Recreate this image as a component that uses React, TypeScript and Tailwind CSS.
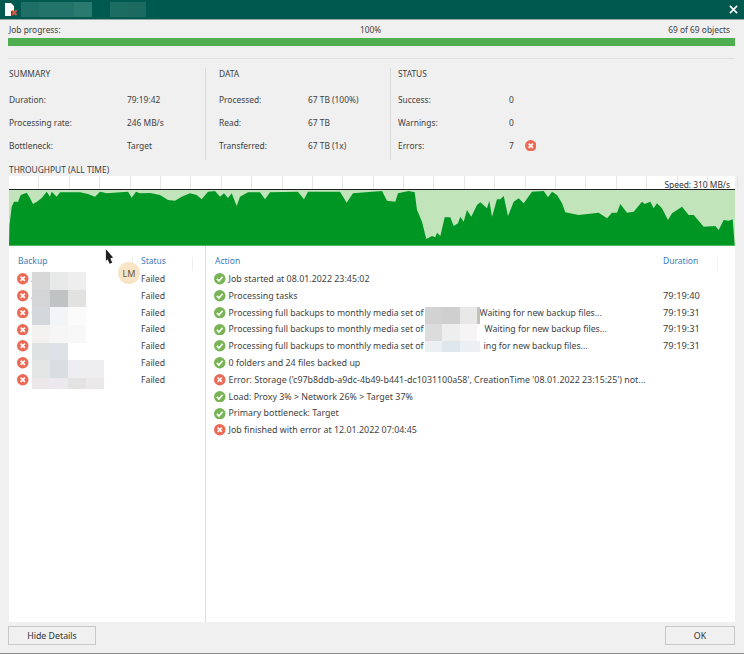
const AREA = "9,246 9.5,225 11.7,206.7 14,201.7 18,201.7 20.7,195 26.7,192.7 30,198 33,204 37,201.7 41.7,198 46.7,191.7 50,196.7 51.7,191.7 56.7,196.7 60,192.3 80,192.3 88,194 95,196.7 100,191.7 106.7,193.3 128,191.7 131.7,197.7 136,191.7 140,193.3 150,193 160,195 168,200 175,200.7 181.7,196.7 190,193.3 196.7,195 201.7,199.3 208,191.7 215,191 220,196.7 224,193.3 228,198 231.7,193.3 236.7,206 240,196.7 248,192.3 260,192.3 265,199.3 270,192.3 298,191.7 304,199.3 308,191.7 340,191.7 346.7,202.7 353,193.3 372,191.7 382,191 387,200.7 395.3,201.7 398,193.3 408.7,191 414.7,192.3 417,210 422,221.7 426.3,239 432,236 435.3,237.3 437,232.7 440.3,236 444.7,217.3 450.3,217.3 453.7,226 458,223.3 460.3,216.7 463.7,221.7 467,210 471.3,216.7 477,205 480.3,202.3 487,208.3 489.3,200.7 492,216.7 497,199.3 500.3,199.3 503.7,196 508,216 513.7,201.7 518.7,198.3 523.7,203.3 532,191.7 543.7,191 548,197.3 552,191.7 557,195 562,203.3 565.3,212.3 578.7,215 598.7,212.7 607,218.3 612,212.7 617,212.7 620.3,204 627,212.7 633.7,211.7 642,201.7 644.7,204 650.3,201.7 653.7,208.3 657,203.3 662,208.3 668,220 672,213.3 682,206.7 688.7,215 693.7,215 703.7,226.7 715.3,226 718.7,230 723.7,220 728.7,220.7 732.7,219.3 734.7,246";

function Ok() {
  return (
    <svg viewBox="0 0 12 12" className="w-[11.5px] h-[11.5px] shrink-0">
      <circle cx="6" cy="6" r="6" fill="#78b455" />
      <path d="M3 6.2 5.2 8.4 9 4" fill="none" stroke="#fff" strokeWidth="1.7" />
    </svg>
  );
}

function Err() {
  return (
    <svg viewBox="0 0 12 12" className="w-[11.5px] h-[11.5px] shrink-0">
      <circle cx="6" cy="6" r="6" fill="#ec6a55" />
      <path d="M3.8 3.8 8.2 8.2M8.2 3.8 3.8 8.2" fill="none" stroke="#fff" strokeWidth="1.8" />
    </svg>
  );
}

function Stat({ label, value, vx, extra }: { label: string; value: string; vx: string; extra?: boolean }) {
  return (
    <div className="flex items-center h-[23px] leading-[14px]">
      <span className={vx}>{label}</span>
      <span>{value}</span>
      {extra && <span className="ml-[11px]"><Err /></span>}
    </div>
  );
}

const TITLE = ["#1f6f66", "#23736a", "#23736a", "#2a7a70", "#00594e", "#1c6c62", "#1c6a5f"];
const BACKUP_MOSAIC = [
  ["#d8d8d9", "#e8e9e9", "#eeeeee", "#ffffff"],
  ["#d3d5d6", "#bfc3c3", "#e2e2e0", "#ffffff"],
  ["#d4d7dc", "#f2f4f5", "#fbfbfb", "#ffffff"],
  ["#f3f2f1", "#f6f6f6", "#f8f8f8", "#ffffff"],
  ["#dfe2e2", "#dde2e8", "#ffffff", "#ffffff"],
  ["#e4e6e6", "#d9dee0", "#eeedf0", "#eeedf0"],
  ["#ece8ea", "#ebe9ee", "#e3e3e4", "#ebe8ea"],
];
const ACTION_MOSAIC = [
  ["#d2d2d2", "#cfcfcf", "#e8e8e8", "#c4c1bb"],
  ["#dcdcdc", "#eeeeee", "#f6f4f4", "#ffffff"],
  ["#ecf0f2", "#dfe7ec", "#ecf0f2", "#ecf0f2"],
];
const LETTERS = ["A", "A", "C", "F", "F", "F", "F"];

type Act = { ok: boolean; text: string; tail?: string; gap?: string; dur?: string };
const ACTIONS: Act[] = [
  { ok: true, text: "Job started at 08.01.2022 23:45:02" },
  { ok: true, text: "Processing tasks", dur: "79:19:40" },
  { ok: true, text: "Processing full backups to monthly media set of", tail: "Waiting for new backup files...", gap: "w-[50px]", dur: "79:19:31" },
  { ok: true, text: "Processing full backups to monthly media set of", tail: "Waiting for new backup files...", gap: "w-[55px]", dur: "79:19:31" },
  { ok: true, text: "Processing full backups to monthly media set of", tail: "ing for new backup files...", gap: "w-[54px]", dur: "79:19:31" },
  { ok: true, text: "0 folders and 24 files backed up" },
  { ok: false, text: "Error: Storage ('c97b8ddb-a9dc-4b49-b441-dc1031100a58', CreationTime '08.01.2022 23:15:25') not..." },
  { ok: true, text: "Load: Proxy 3% > Network 26% > Target 37%" },
  { ok: true, text: "Primary bottleneck: Target" },
  { ok: false, text: "Job finished with error at 12.01.2022 07:04:45" },
];

export default function App() {
  return (
    <div className="relative w-[744px] h-[654px] overflow-hidden flex flex-col bg-[#f0f0f0] text-[#3f3f3f] text-[8.4px] leading-none font-['Noto_Sans',sans-serif]">
      <div className="h-[20px] shrink-0 flex items-center bg-[#00594e] border-b border-[#8fa8a4] pl-[5px] pr-[5px]">
        <svg viewBox="0 0 12 13" className="w-[12px] h-[13px] shrink-0">
          <path d="M0 0h6l3 3v5H6v5H0z" fill="#fff" />
          <path d="M7 7.5 11.5 12M11.5 7.5 7 12" stroke="#e0533d" strokeWidth="2" />
        </svg>
        <div className="flex ml-[4px] h-[15px]">
          {TITLE.map((c, i) => (
            <div key={i} className="w-[17.8px] h-full" style={{ backgroundColor: c }} />
          ))}
        </div>
        <svg viewBox="0 0 10 10" className="w-[9px] h-[9px] ml-auto mr-[1px]">
          <path d="M1 1 9 9M9 1 1 9" stroke="#fff" strokeWidth="1.8" />
        </svg>
      </div>

      <div className="h-[17px] shrink-0 relative flex items-center justify-between pl-[9px] pr-[14px] pt-[3px] leading-[12px]">
        <span>Job progress:</span>
        <span className="absolute left-[360px]">100%</span>
        <span>69 of 69 objects</span>
      </div>
      <div className="h-[8px] mt-[1px] shrink-0 ml-[8px] mr-[9px] bg-[#4fae4f]" />
      <div className="h-[1px] mt-[12px] shrink-0 ml-[8px] mr-[9px] bg-[#e0e0e0]" />

      <div className="h-[92px] shrink-0 flex mt-[9px]">
        <div className="w-[206px] pl-[9px] border-r border-[#dcdcdc]">
          <div className="h-[19px] pt-[2px]">SUMMARY</div>
          <div className="pt-[1px]">
            <Stat label="Duration:" value="79:19:42" vx="w-[118px]" />
            <Stat label="Processing rate:" value="246 MB/s" vx="w-[118px]" />
            <Stat label="Bottleneck:" value="Target" vx="w-[118px]" />
          </div>
        </div>
        <div className="w-[185px] pl-[13px] border-r border-[#dcdcdc]">
          <div className="h-[19px] pt-[2px]">DATA</div>
          <div className="pt-[1px]">
            <Stat label="Processed:" value="67 TB (100%)" vx="w-[89px]" />
            <Stat label="Read:" value="67 TB" vx="w-[89px]" />
            <Stat label="Transferred:" value="67 TB (1x)" vx="w-[89px]" />
          </div>
        </div>
        <div className="flex-1 pl-[7px]">
          <div className="h-[19px] pt-[2px]">STATUS</div>
          <div className="pt-[1px]">
            <Stat label="Success:" value="0" vx="w-[111px]" />
            <Stat label="Warnings:" value="0" vx="w-[111px]" />
            <Stat label="Errors:" value="7" vx="w-[111px]" extra />
          </div>
        </div>
      </div>

      <div className="h-[8px] shrink-0 pl-[9px] leading-[8px] mt-[6px] mb-[2px]">THROUGHPUT (ALL TIME)</div>

      <div className="relative h-[70px] shrink-0 ml-[9px] mr-[9px] flex flex-col">
        <div className="h-[14px] shrink-0 flex bg-white border-b border-[#222]">
          {Array.from({ length: 24 }).map((_, i) => (
            <div key={i} className="w-[30.4px] shrink-0 border-r border-[#e6e6e6]" />
          ))}
        </div>
        <span className="absolute right-[5px] top-[5px] text-[#333]">Speed: 310 MB/s</span>
        <svg viewBox="9 190 726 56" preserveAspectRatio="none" className="w-full flex-1 block">
          <rect x="9" y="190" width="726" height="56" fill="#c1e4ba" />
          <polygon points={AREA} fill="#009624" />
          <rect x="9" y="245" width="726" height="1" fill="#4fb662" />
        </svg>
      </div>

      <div className="relative flex-1 shrink-0 ml-[9px] mr-[9px] flex bg-white">
        <div className="w-[197px] shrink-0 border-r border-[#dedede]">
          <div className="h-[24.6px] flex pt-[11px] text-[#3c7dbd] text-[8.5px]">
            <span className="w-[124px] pl-[9px] h-[14px] border-r border-[#eeeeee]">Backup</span>
            <span className="w-[60px] pl-[8px] h-[14px] border-r border-[#eeeeee]">Status</span>
          </div>
          {LETTERS.map((l, i) => (
            <div key={i} className="h-[16.8px] flex items-center text-[8.7px] leading-[14px]">
              <span className="w-[132px] pl-[8px] flex items-center gap-[3px] shrink-0">
                <Err />
                <span>{l}</span>
              </span>
              <span>Failed</span>
            </div>
          ))}
        </div>
        <div className="flex-1 min-w-0">
          <div className="h-[24.6px] flex pt-[11px] text-[#3c7dbd] text-[8.5px]">
            <span className="w-[457px] pl-[9px] shrink-0">Action</span>
            <span className="w-[55px] h-[14px] border-r border-[#f4f4f4]">Duration</span>
          </div>
          {ACTIONS.map((a, i) => (
            <div key={i} className="h-[16.8px] flex items-center pl-[8px] leading-[14px]">
              <span className={a.tail ? "w-[449px] shrink-0 flex items-center gap-[3px] whitespace-nowrap text-[8.7px]" : "w-[449px] shrink-0 flex items-center gap-[3px] whitespace-nowrap text-[8.9px]"}>
                {a.ok ? <Ok /> : <Err />}
                <span>{a.text}</span>
                {a.gap && <span className={`${a.gap} shrink-0`} />}
                {a.tail && <span>{a.tail}</span>}
              </span>
              {a.dur && <span className="text-[9.3px]">{a.dur}</span>}
            </div>
          ))}
        </div>

        <div className="absolute left-[23px] top-[26px] flex flex-col">
          {BACKUP_MOSAIC.map((row, r) => (
            <div key={r} className={r === 6 ? "flex h-[11px]" : "flex h-[17.67px]"}>
              {row.map((c, k) => (
                <div key={k} className="w-[18px]" style={{ backgroundColor: c }} />
              ))}
            </div>
          ))}
        </div>
        <div className="absolute left-[416px] top-[61px] flex flex-col">
          {ACTION_MOSAIC.map((row, r) => (
            <div key={r} className={r === 2 ? "flex h-[11px]" : "flex h-[17px]"}>
              {row.map((c, k) => (
                <div key={k} className={k === 3 ? "w-[3.5px]" : "w-[17.3px]"} style={{ backgroundColor: c }} />
              ))}
            </div>
          ))}
        </div>

        <div className="absolute left-[109px] top-[16px] w-[22px] h-[22px] rounded-full bg-[#f7e5c5] flex items-center justify-center text-[#6a5836] text-[9px]">LM</div>
        <svg viewBox="0 0 10 16" className="absolute left-[96px] top-[3px] w-[9px] h-[15px]">
          <path d="M1 0 9 9 6 10 8 15 5 16 3 11 1 13z" fill="#222" />
        </svg>
      </div>

      <div className="h-[32px] shrink-0 flex items-start justify-between pl-[8px] pr-[9px] pt-[4px] border-b border-[#8c8c8c]">
        <button className="w-[88px] h-[19px] bg-[#f0f0f0] border border-[#c8c8c8] text-[#333] text-[8.8px] leading-[14px]">Hide Details</button>
        <button className="w-[70px] h-[19px] bg-[#f0f0f0] border border-[#c8c8c8] text-[#333] text-[8.8px] leading-[14px]">OK</button>
      </div>
    </div>
  );
}
